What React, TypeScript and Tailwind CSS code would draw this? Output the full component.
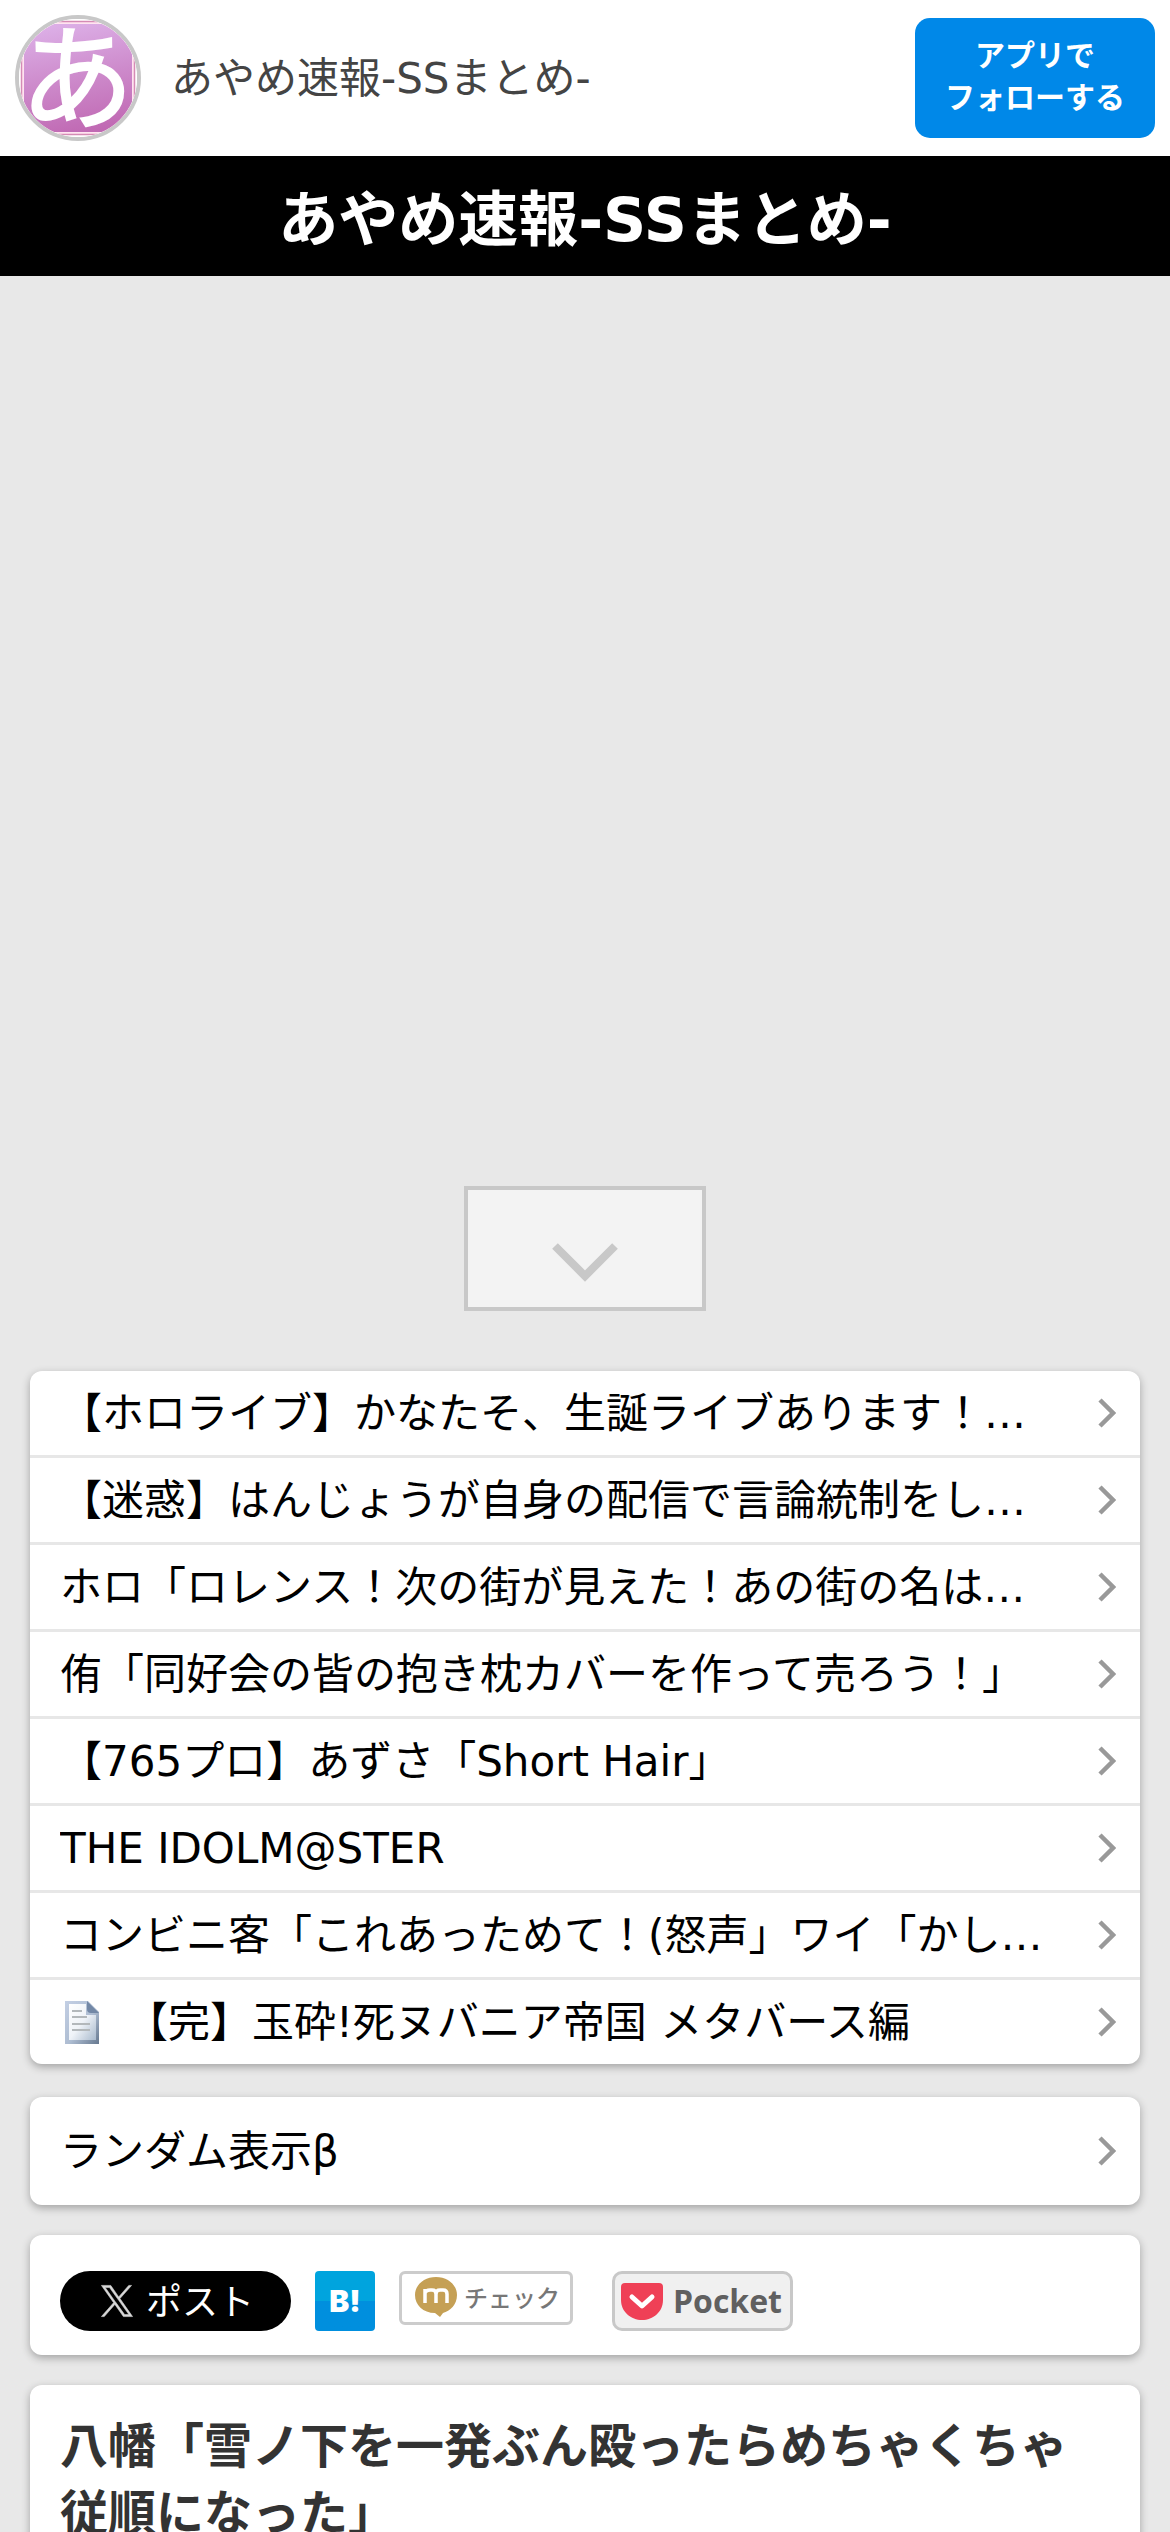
import React from "react";

type Entry = { title: string; icon?: boolean };

const entries: Entry[] = [
  { title: "【ホロライブ】かなたそ、生誕ライブあります！…" },
  { title: "【迷惑】はんじょうが自身の配信で言論統制をし…" },
  { title: "ホロ「ロレンス！次の街が見えた！あの街の名は…" },
  { title: "侑「同好会の皆の抱き枕カバーを作って売ろう！」" },
  { title: "【765プロ】あずさ「Short Hair」" },
  { title: "THE IDOLM@STER" },
  { title: "コンビニ客「これあっためて！(怒声」ワイ「かし…" },
  { title: "【完】玉砕!死ヌバニア帝国 メタバース編", icon: true },
];

const CARD = "overflow-hidden rounded-xl bg-white shadow-[0_3px_9px_rgba(0,0,0,0.3)]";

function Chevron() {
  return (
    <svg className="h-[30px] w-[18px] shrink-0" viewBox="0 0 18 30" fill="none" aria-hidden="true">
      <path d="M2 2 L15 15 L2 28" stroke="#999" strokeWidth="4.5" />
    </svg>
  );
}

function Avatar() {
  return (
    <svg viewBox="0 0 118 118" className="size-full" aria-hidden="true">
      <defs>
        <linearGradient id="iris" x1="0.4" y1="0" x2="0.6" y2="1">
          <stop offset="0" stopColor="#dcaee6" />
          <stop offset="0.5" stopColor="#cd8acb" />
          <stop offset="1" stopColor="#c069b3" />
        </linearGradient>
      </defs>
      <rect width="118" height="118" fill="#fff" />
      <rect x="2.5" y="2.5" width="113" height="113" fill="#ffe4f0" stroke="#d58bb5" strokeWidth="1.5" />
      <rect x="5" y="5" width="108" height="108" fill="url(#iris)" />
      <text
        x="58"
        y="101"
        textAnchor="middle"
        fontSize="114"
        fontWeight="400"
        fill="#fff"
        stroke="#fff"
        strokeWidth="2"
        fontFamily="'Noto Sans CJK JP', sans-serif"
      >
        あ
      </text>
    </svg>
  );
}

function DocumentIcon() {
  return (
    <svg className="size-12 shrink-0" viewBox="0 0 48 48" aria-hidden="true">
      <defs>
        <linearGradient id="sheet" x1="0" y1="0" x2="1" y2="1">
          <stop offset="0" stopColor="#c3cfe4" />
          <stop offset="0.55" stopColor="#aebdd2" />
          <stop offset="1" stopColor="#66788f" />
        </linearGradient>
        <linearGradient id="paper" x1="0" y1="0" x2="1" y2="1">
          <stop offset="0" stopColor="#fff" />
          <stop offset="0.5" stopColor="#eff3f8" />
          <stop offset="1" stopColor="#a9bacd" />
        </linearGradient>
      </defs>
      <path d="M5 3 H28 L39 14 V46 H5 Z" fill="url(#sheet)" />
      <path d="M9 6 H26 V17 H36 V42 H9 Z" fill="url(#paper)" />
      <path d="M27 3 L39 15 H31 Q27 15 27 11 Z" fill="#7388a6" />
      <path d="M12 13 H22 M12 19 H27 M12 26 H30 M12 32 H30" stroke="#b3b8bb" strokeWidth="2" />
    </svg>
  );
}

function Row({ title, icon }: Entry) {
  return (
    <a href="#" className="flex h-[84px] items-center pr-6 pl-[30px] text-[42px] leading-[60px] text-black">
      {icon && (
        <span className="mr-[18px]">
          <DocumentIcon />
        </span>
      )}
      <span className="min-w-0 flex-1 truncate pt-0.5">{title}</span>
      <Chevron />
    </a>
  );
}

export default function App() {
  return (
    <div
      lang="ja"
      className="min-h-screen bg-[#e8e8e8] font-['DejaVu_Sans','Noto_Sans_CJK_JP',sans-serif]"
    >
      <header className="flex h-[156px] items-center bg-white px-[15px]">
        <div className="size-[126px] shrink-0 overflow-hidden rounded-full border-4 border-[#c8c8c8]">
          <Avatar />
        </div>
        <p className="ml-[30px] flex-1 pt-0.5 text-[42px] leading-[60px] text-[#444]">あやめ速報-SSまとめ-</p>
        <a
          href="#"
          className="flex h-[120px] w-[240px] items-center justify-center rounded-[15px] bg-[#0088e8] pb-0.5 text-center text-[30px] leading-[42px] font-bold text-white"
        >
          アプリで
          <br />
          フォローする
        </a>
      </header>

      <h1 className="flex h-[120px] items-center justify-center bg-black pt-2 text-[60px] leading-[90px] font-bold text-white">
        あやめ速報-SSまとめ-
      </h1>

      <div className="flex justify-center pt-[910px]">
        <button
          type="button"
          aria-label="開く"
          className="flex h-[125px] w-[242px] items-end justify-center border-4 border-[#c8c8c8] bg-[#f3f3f3] pb-[25px]"
        >
          <svg className="h-[39px] w-[66px]" viewBox="0 0 66 39" fill="none" aria-hidden="true">
            <path d="M3 3 L33 33 L63 3" stroke="#c8c8c8" strokeWidth="8" />
          </svg>
        </button>
      </div>

      <main className="flex flex-col gap-[30px] px-[30px] pt-[60px]">
        <ul className={`${CARD} divide-y-3 divide-[#e7e7e7]`}>
          {entries.map((e) => (
            <li key={e.title}>
              <Row {...e} />
            </li>
          ))}
        </ul>

        <div className={`${CARD} mt-[3px] py-3`}>
          <Row title="ランダム表示β" />
        </div>

        <div className={`${CARD} flex h-[120px] items-start px-[30px] pt-9 font-['Noto_Sans_CJK_JP',sans-serif]`}>
          <button
            type="button"
            className="flex h-[60px] w-[231px] items-center gap-3 rounded-full bg-black pb-1 pl-10 text-[36px] leading-[48px] text-white"
          >
            <svg className="mt-1 size-[34px] shrink-0" viewBox="0 0 24 24" fill="#d8d8d8" stroke="#d8d8d8" strokeWidth="0.4" aria-hidden="true">
              <path d="M14.1 10.3 22.3 1h-2l-7.100 8.100L7.600 1H1l8.600 12.200L1 23h2l7.500-8.600 6 8.600H23Zm-2.700 3-.9-1.200L3.700 2.500h3l5.600 7.800.9 1.200 7.200 10.100h-3Z" />
            </svg>
            ポスト
          </button>
          <a
            href="#"
            className="ml-6 flex size-[60px] items-center justify-center rounded-sm bg-linear-to-b from-[#00a4de] from-50% to-[#008fde] to-50% font-['Inter',sans-serif] text-[30px] leading-[60px] font-black text-white"
          >
            B!
          </a>
          <a
            href="#"
            className="ml-6 flex h-[54px] w-[174px] items-center gap-[6px] rounded-md border-3 border-[#ccc] bg-white pb-0.5 pl-3 text-[24px] leading-[36px] font-medium text-[#777]"
          >
            <svg className="h-[42px] w-11 shrink-0" viewBox="0 0 44 42" fill="none" aria-hidden="true">
              <path d="M22 1 C34 1 43 9 43 19 C43 29 36 35 29 37 L26 41 L21 37 C9 37 1 29 1 19 C1 9 10 1 22 1 Z" fill="#c5a055" />
              <path
                d="M11 27 V13 M11 17 Q12 14 16 14 H18 Q22 14 22 18 V27 M22 18 Q22 14 26 14 H29 Q33 14 33 18 V27"
                stroke="#fff"
                strokeWidth="3.500"
              />
            </svg>
            <span>チェック</span>
          </a>
          <a
            href="#"
            className="ml-[39px] flex h-[60px] w-[181px] items-center gap-[10px] rounded-[10px] border-3 border-[#c8c8c8] bg-[#f0f0f0] pl-[6px] font-['Open_Sans',sans-serif] text-[32px] leading-[48px] font-bold text-[#606060]"
          >
            <svg className="h-[37px] w-[42px] shrink-0" viewBox="0 0 42 37" fill="none" aria-hidden="true">
              <path d="M4 0 H38 Q42 0 42 4 V17 C42 29 32 37 21 37 C10 37 0 29 0 17 V4 Q0 0 4 0 Z" fill="#ef4056" />
              <path d="M11 14 L21 23 L31 14" stroke="#fff" strokeWidth="5" strokeLinecap="round" strokeLinejoin="round" />
            </svg>
            Pocket
          </a>
        </div>

        <article className={`${CARD} px-[30px] pt-7 pb-6`}>
          <h2 className="text-[48px] leading-[67px] font-bold text-[#333]">
            八幡「雪ノ下を一発ぶん殴ったらめちゃくちゃ従順になった」
          </h2>
        </article>
      </main>
    </div>
  );
}
